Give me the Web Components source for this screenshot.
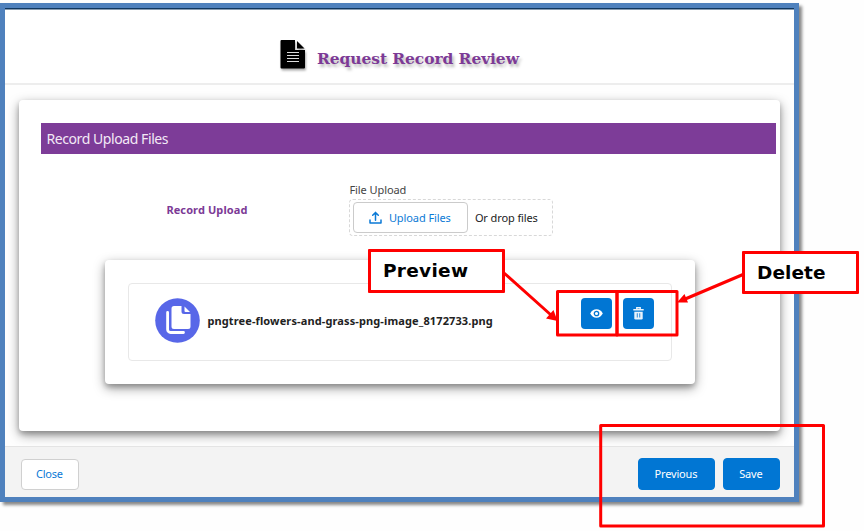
<!DOCTYPE html>
<html lang="en">
<head>
<meta charset="utf-8">
<title>Request Record Review</title>
<style>
body{margin:0;width:864px;height:531px;overflow:hidden;position:relative;background:#fefefe;font:12px "Noto Sans","Open Sans",sans-serif;color:#222}
</style>
</head>
<body>
<review-dialog>
  <dialog-title slot="header"></dialog-title>
  <section-card slot="body" heading="Record Upload Files">
    <upload-field></upload-field>
    <file-card name="pngtree-flowers-and-grass-png-image_8172733.png"></file-card>
  </section-card>
  <ui-button slot="left" style="--w:58px;--h:31px" width="27">Close</ui-button>
  <ui-button slot="right" brand style="--w:77px;--h:32px" width="43">Previous</ui-button>
  <ui-button slot="right" brand style="--w:57px;--h:32px" width="23.5">Save</ui-button>
</review-dialog>
<annotation-layer></annotation-layer>
<script>
function define(name, html, setup) {
  const t = document.createElement('template');
  t.innerHTML = html;
  customElements.define(name, class extends HTMLElement {
    constructor() {
      super();
      this.attachShadow({mode: 'open'}).append(t.content.cloneNode(true));
    }
    connectedCallback() { if (setup) setup(this, this.shadowRoot); }
  });
}

// A single line of text whose tracking is adjusted to fill the given width.
define('fit-text', `<style>:host{display:inline-block;white-space:nowrap}span{display:inline-block}</style><span><slot></slot></span>`, (el, root) => {
  const span = root.querySelector('span');
  const w = parseFloat(el.getAttribute('width'));
  const n = el.textContent.trim().length;
  const natural = span.getBoundingClientRect().width;
  if (w && n > 1 && natural) {
    const s = (w - natural) / (n - 1);
    span.style.letterSpacing = s + 'px';
    span.style.marginRight = -s + 'px';
  }
});

define('ui-button', `<style>
:host{display:flex;box-sizing:border-box;width:var(--w);height:var(--h);align-items:center;justify-content:center;background:#fff;border:1px solid #d0d0d0;border-radius:4px;color:#0b7ad6;font-size:11px;line-height:14px}
:host([brand]){background:#0176d3;border-color:#0176d3;color:#fff}
fit-text{margin:0 1px 1px 0}
</style><fit-text></fit-text>`, (el, root) => {
  const old = root.querySelector('fit-text');
  const f = document.createElement('fit-text');
  f.setAttribute('width', el.getAttribute('width'));
  f.textContent = el.textContent.trim();
  old.replaceWith(f);
});

define('dialog-title', `<style>
:host{display:flex;align-items:flex-start;padding:32px 0 0 275px}
svg{display:block;filter:drop-shadow(1px 2px 1px #0005)}
h1{margin:9px 0 0 11px;font:bold 15.500px/20px "DejaVu Serif",serif;color:#7c3a96;text-shadow:2px 3px 3px #0004}
</style>
<svg width="26" height="30" viewBox="0 0 26 30"><path d="M1 0H15V10H25V27.500a1 1 0 0 1-1 1H1.500a1 1 0 0 1-1-1V1a1 1 0 0 1 1-1Z"/><path d="M17 1V8.500H24.500Z"/><path d="M7 12.500H19M7 15.500H19M7 18.500H19M7 21.500H19" stroke="#ddd" stroke-width="1.100" fill="none"/></svg>
<h1><fit-text width="202">Request Record Review</fit-text></h1>`);

define('review-dialog', `<style>
:host{display:grid;grid-template-rows:77px 361px 1fr;box-sizing:border-box;width:799px;height:499px;margin-top:3px;border:5px solid #4f81bd;background:#fff;box-shadow:inset 0 1.500px #10375f,3px 3px 3px #0007}
header{border-bottom:2px solid #ededed;box-sizing:border-box}
main{padding:15px 15px 0 14px;background:#fefefe;overflow:hidden}
footer{display:flex;box-sizing:border-box;justify-content:space-between;align-items:flex-start;background:#f3f3f3;border-top:1px solid #e4e4e4;padding:12px 14px 0 16px}
.right{display:flex;gap:8px;margin-top:-1px}
</style>
<header><slot name="header"></slot></header><main><slot name="body"></slot></main>
<footer><slot name="left"></slot><div class="right"><slot name="right"></slot></div></footer>`);

define('section-card', `<style>
:host{display:block;box-sizing:border-box;width:761px;height:331px;padding:23.400px 4px 0 22px;border-radius:4px;background:#fff;box-shadow:0 4px 12px #0006,0 3px 5px #0003}
h2{margin:0;height:31px;box-sizing:border-box;padding-left:5.500px;background:#7d3c98;color:#f3e9f6;font:14px/32px "Noto Sans",sans-serif}
</style><h2></h2><slot></slot>`, (el, root) => {
  const f = document.createElement('fit-text');
  f.setAttribute('width', '122');
  f.textContent = el.getAttribute('heading');
  root.querySelector('h2').replaceChildren(f);
});

define('upload-field', `<style>
:host{display:grid;grid-template-columns:183px 206px;padding:27.600px 0 0 125.400px;height:78px;box-sizing:content-box}
.name{font-weight:bold;font-size:11px;line-height:15px;color:#7c3a96;padding-top:20px}
.label{font-size:11px;line-height:15px;color:#444}
.drop{display:flex;align-items:center;box-sizing:border-box;width:204px;height:37px;margin-top:2px;padding-left:2.500px;border:1px dashed #d8d8d8;border-radius:4px}
.btn{display:flex;align-items:center;box-sizing:border-box;width:115px;height:31px;border:1px solid #cbcbcb;border-radius:4px;padding-left:15px;color:#0b7ad6;font-size:11px;line-height:15px}
.btn svg{margin-right:7px}
.or{font-size:11px;line-height:15px;margin-left:7px;color:#222}
</style>
<div class="name"><fit-text width="81">Record Upload</fit-text></div>
<div><div class="label"><fit-text width="57">File Upload</fit-text></div>
<div class="drop"><div class="btn"><svg width="13" height="13" viewBox="0 0 13 13" fill="none" stroke="#0b7ad6" stroke-width="1.500" stroke-linecap="round" stroke-linejoin="round"><path d="M1 9V12H12V9M6.500 9.200V1.500M3.700 4.300L6.500 1.400L9.300 4.300"/></svg><fit-text width="62">Upload Files</fit-text></div><div class="or"><fit-text width="63">Or drop files</fit-text></div></div></div>`);

define('file-card', `<style>
:host{display:block;box-sizing:border-box;width:590px;height:124px;margin-left:64px;padding:23px;border-radius:4px;background:#fff;box-shadow:0 4px 12px #0006,0 3px 5px #0003}
.row{display:flex;align-items:center;box-sizing:border-box;width:544px;height:78px;border:1.500px solid #e8e8e8;border-radius:4px;padding:0 0 2px 26px}
.name{font-weight:bold;font-size:11px;line-height:15px;color:#222;margin-left:7.400px;width:373.600px}
.act{display:flex;align-items:center;justify-content:center;width:31px;height:31px;border-radius:4px;background:#0176d3;margin:-14px 11.500px 0 0}
</style>
<div class="row">
<svg width="45" height="45" viewBox="0 0 45 45"><circle cx="22.500" cy="22.500" r="22.300" fill="#5867e8"/><path d="M19 8H26.500V13.500a2.500 2.500 0 0 0 2.500 2.500H35.500V28.500a2.500 2.500 0 0 1-2.500 2.500H19a2.500 2.500 0 0 1-2.500-2.500V10.500A2.500 2.500 0 0 1 19 8Z" fill="#fff"/><path d="M29.500 8.500L35 14H30.500a1 1 0 0 1-1-1Z" fill="#fff"/><path d="M12.600 14.500V31.500a3 3 0 0 0 3 3H28.500" fill="none" stroke="#fff" stroke-width="2.800" stroke-linecap="round"/></svg>
<div class="name"></div>
<div class="act"><svg width="13" height="9" viewBox="0 0 13 9"><path d="M.2 4.500Q2.500.3 6.500.3T12.800 4.500Q10.500 8.700 6.500 8.700T.2 4.500Z" fill="#fff"/><circle cx="6.500" cy="4.500" r="2.200" fill="none" stroke="#0176d3" stroke-width="1.300"/></svg></div>
<div class="act"><svg width="11" height="13" viewBox="0 0 11 13"><path d="M.3 2.800H10.700M3.800 2.500V.8H7.200V2.500" fill="none" stroke="#e9f3fb" stroke-width="1.400"/><path d="M1.300 4.700H9.700V11.200a1.300 1.300 0 0 1-1.300 1.300H2.600A1.300 1.300 0 0 1 1.300 11.200Z" fill="#e9f3fb"/><path d="M4.300 6.300V10.500M6.700 6.300V10.500" stroke="#3b92dc" stroke-width="1.100"/></svg></div>
</div>`, (el, root) => {
  const f = document.createElement('fit-text');
  f.setAttribute('width', '285.5');
  f.textContent = el.getAttribute('name');
  root.querySelector('.name').replaceChildren(f);
});

define('annotation-layer', `<style>
:host{position:absolute;inset:0;display:block}
svg{position:absolute;inset:0}
.label{position:absolute;box-sizing:border-box;border:3px solid #f00;border-radius:1px;background:#fff;color:#000;font:bold 18.500px/20px "DejaVu Sans",sans-serif}
.preview{left:368px;top:249px;width:137px;height:44px;padding:9px 0 0 12px}
.delete{left:742px;top:251px;width:117px;height:43px;padding:9px 0 0 12px}
</style>
<svg width="864" height="531" viewBox="0 0 864 531" fill="none" stroke="#f00" stroke-width="3" stroke-linejoin="round"><rect x="557.500" y="291.500" width="59.500" height="43.500"/><rect x="617" y="291.500" width="60" height="43.500"/><rect x="600.700" y="425.500" width="222.800" height="100.500"/><path d="M504 273L551 315M743 274.500L684 299.500"/><path d="M557.500 321L546 318.500L553.500 310ZM677 302.500L684.500 294L688 302.500Z" fill="#f00" stroke="none"/></svg>
<div class="label preview"><fit-text width="85">Preview</fit-text></div>
<div class="label delete"><fit-text width="68.5">Delete</fit-text></div>`);
</script>
</body>
</html>
